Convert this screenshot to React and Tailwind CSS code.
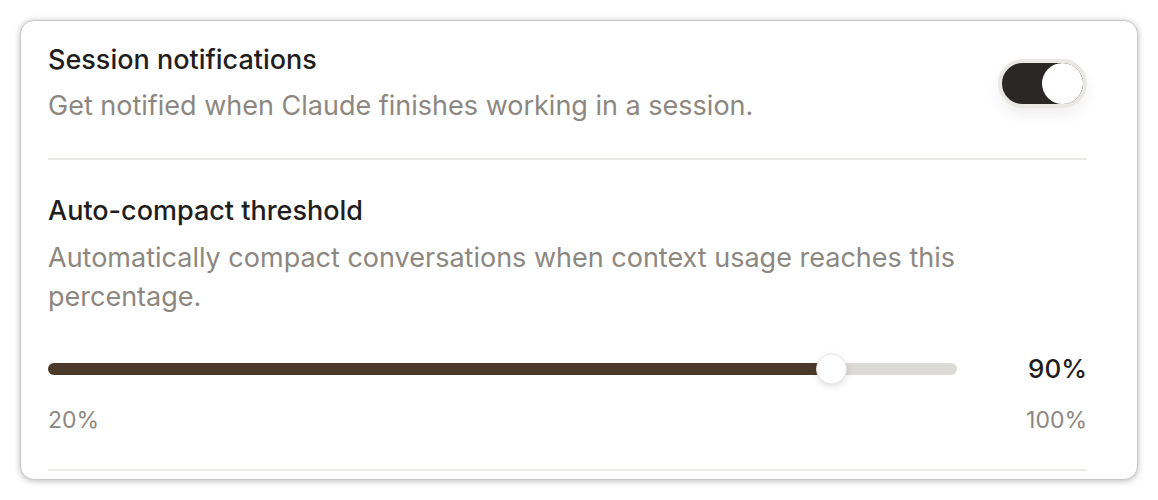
export default function App() {
  const value = 90;
  const frac = (value - 20) / 80;
  const thumb = 31;
  const thumbLeft = `calc(${frac} * (100% - ${thumb}px))`;
  const fillWidth = `calc(${frac} * (100% - ${thumb}px) + ${thumb / 2}px)`;
  return (
    <div className="w-[1158px] h-[500px] bg-white p-[20px]" style={{ fontFamily: 'Inter, "Noto Sans", sans-serif' }}>
      <div className="w-[1118px] h-[460px] rounded-[14px] border border-[#c9c9c9] bg-white shadow-[0_1px_6px_rgba(0,0,0,0.28)] pl-[27px] pr-[50px] overflow-hidden">
        <div className="flex items-center justify-between pt-[22px] pb-[35px] border-b-2 border-[#ebe9e6]">
          <div>
            <div className="text-[27px] leading-[34px] font-medium text-[#1f1e1d]">Session notifications</div>
            <div className="mt-[12px] text-[27px] leading-[34px] text-[#8d8781]">Get notified when Claude finishes working in a session.</div>
          </div>
          <div className="w-[89px] h-[49px] rounded-full border-[4px] border-[#eae8e5] bg-[#2b2726] flex items-center justify-end shadow-[0_8px_14px_rgba(0,0,0,0.06)]">
            <div className="w-[41px] h-[41px] rounded-full bg-white" />
          </div>
        </div>
        <div className="pt-[34px] pb-[34px] border-b-2 border-[#ebe9e6]">
          <div className="text-[27px] leading-[34px] font-medium text-[#1f1e1d]">Auto-compact threshold</div>
          <div className="mt-[10px] text-[27px] leading-[39px] text-[#8d8781]">Automatically compact conversations when context usage reaches this percentage.</div>
          <div className="mt-[36px] flex items-center justify-between h-[34px]">
            <div className="relative w-[909px] h-[12px] rounded-full bg-[#dcdad6]">
              <div className="h-full rounded-full bg-[#4b3a29]" style={{ width: fillWidth }} />
              <div className="absolute top-1/2 w-[31px] h-[31px] -translate-y-1/2 rounded-full bg-white border border-[#e6e4e0] shadow-[0_2px_6px_rgba(0,0,0,0.12)]" style={{ left: thumbLeft }} />
            </div>
            <div className="text-[26px] leading-[34px] font-medium text-[#1f1e1d]">90%</div>
          </div>
          <div className="mt-[19px] flex justify-between text-[23px] leading-[30px] text-[#8d8781]">
            <span>20%</span>
            <span>100%</span>
          </div>
        </div>
      </div>
    </div>
  );
}
